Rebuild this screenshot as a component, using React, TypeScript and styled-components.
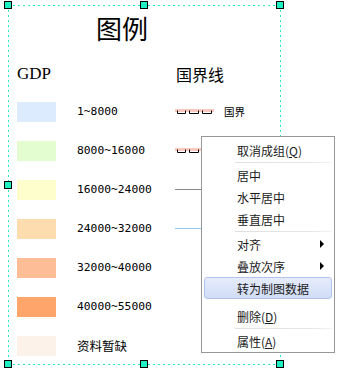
import React from 'react';
import styled, { createGlobalStyle } from 'styled-components';

const GlobalStyle = createGlobalStyle`
  html, body {
    margin: 0;
    padding: 0;
    background: #ffffff;
  }
  body {
    font-family: 'Noto Sans CJK SC', 'Noto Sans', sans-serif;
  }
`;

const DOT = '#22e9c6';

const Page = styled.div`
  position: relative;
  width: 344px;
  height: 369px;
  overflow: hidden;
  background: #fff;
`;

const Frame = styled.div`
  position: relative;
  box-sizing: border-box;
  margin: 5px 0 0 8px;
  width: 273px;
  height: 360px;
  padding: 10px 0 0 9px;
  background-image:
    repeating-linear-gradient(to right, ${DOT} 0 2px, transparent 2px 5px),
    repeating-linear-gradient(to right, ${DOT} 0 2px, transparent 2px 5px),
    repeating-linear-gradient(to bottom, ${DOT} 0 2px, transparent 2px 5px),
    repeating-linear-gradient(to bottom, ${DOT} 0 2px, transparent 2px 5px);
  background-size: 100% 1px, 100% 1px, 1px 100%, 1px 100%;
  background-position: 0 0, 0 100%, 0 0, 100% 0;
  background-repeat: no-repeat;
`;

const Handle = styled.span<{ $x: string; $y: string }>`
  position: absolute;
  left: ${(p) => p.$x};
  top: ${(p) => p.$y};
  width: 8px;
  height: 8px;
  box-sizing: border-box;
  margin: -4px 0 0 -4px;
  background: #1ff0c4;
  border: 1px solid #000;
`;

const Title = styled.div`
  margin: 0 0 15px 79px;
  height: 26px;
  line-height: 26px;
  font-size: 26px;
  color: #000;
`;

const Legend = styled.div`
  display: grid;
  grid-template-columns: 158px auto;
  grid-template-rows: 36px repeat(7, 39px);
  grid-auto-flow: column;
`;

const Column = styled.div`
  display: contents;
`;

const Header = styled.div<{ $serif?: boolean }>`
  display: flex;
  align-items: center;
  font-family: ${(p) =>
    p.$serif ? "'Liberation Serif', serif" : "'Noto Sans CJK SC', sans-serif"};
  font-size: ${(p) => (p.$serif ? '17px' : '16px')};
  padding-left: ${(p) => (p.$serif ? '0' : '1px')};
  color: #000;
`;

const Row = styled.div<{ $gap: number }>`
  display: flex;
  align-items: center;
  gap: ${(p) => p.$gap}px;
`;

const Swatch = styled.span<{ $color: string }>`
  width: 39px;
  height: 20px;
  background: ${(p) => p.$color};
  flex: none;
`;

const Label = styled.span<{ $cjk?: boolean }>`
  font-family: ${(p) =>
    p.$cjk
      ? "'Noto Sans CJK SC', sans-serif"
      : "'DejaVu Sans Mono', 'Liberation Mono', monospace"};
  font-size: ${(p) => (p.$cjk ? '12.5px' : '11.3px')};
  color: #000;
  white-space: nowrap;
`;

const SmallLabel = styled.span`
  font-size: 10.5px;
  color: #000;
  white-space: nowrap;
`;

const PlainLine = styled.span<{ $color: string }>`
  width: 39px;
  height: 1px;
  background: ${(p) => p.$color};
  flex: none;
`;

const BorderSymbol = () => (
  <svg width="39" height="8" viewBox="0 0 39 8" style={{ flex: 'none' }}>
    <rect x="0" y="1" width="39" height="3" fill="#f9c9bf" />
    <path
      d="M2.5 2.5 V5.5 H10.5 V2.5 M14.5 2.5 V5.5 H23.5 V2.5 M27.5 2.5 V5.5 H36.5 V2.5"
      fill="none"
      stroke="#000"
      strokeWidth="1"
    />
  </svg>
);

const Menu = styled.div`
  position: absolute;
  left: 201px;
  top: 136px;
  width: 134px;
  height: 217px;
  box-sizing: border-box;
  padding-top: 2px;
  background: #fff;
  border: 1px solid #979797;
  font-family: 'Noto Sans CJK SC', sans-serif;
  font-size: 12px;
  color: #1b1b1b;
`;

const Item = styled.div<{ $active?: boolean }>`
  display: flex;
  align-items: center;
  justify-content: space-between;
  box-sizing: border-box;
  height: 22px;
  margin: 0 2px;
  padding: 0 7px 0 32px;
  border: 1px solid ${(p) => (p.$active ? '#b3c3ea' : 'transparent')};
  border-radius: 3px;
  background: ${(p) =>
    p.$active ? 'linear-gradient(#e6ecfb, #d0dcf6)' : 'transparent'};
  white-space: nowrap;
`;

const Arrow = styled.span`
  width: 0;
  height: 0;
  border-left: 4px solid #000;
  border-top: 4px solid transparent;
  border-bottom: 4px solid transparent;
`;

const Separator = styled.div`
  height: 1px;
  margin: 1px 2px 1px 33px;
  background: linear-gradient(to right, #e0e0e0, #e6e6e6 80%, #f4f4f4);
`;

const Gap = styled.div`
  height: 6px;
`;

const gdp = [
  { color: '#dcebfd', label: '1~8000' },
  { color: '#e3fdd1', label: '8000~16000' },
  { color: '#fefecd', label: '16000~24000' },
  { color: '#fddcaf', label: '24000~32000' },
  { color: '#fdbd96', label: '32000~40000' },
  { color: '#fda56a', label: '40000~55000' },
];

const App = () => {
  return (
    <Page>
      <GlobalStyle />
      <Frame>
        <Title>图例</Title>
        <Legend>
          <Column>
            <Header $serif>GDP</Header>
            {gdp.map((g) => (
              <Row key={g.label} $gap={21}>
                <Swatch $color={g.color} />
                <Label>{g.label}</Label>
              </Row>
            ))}
            <Row $gap={21}>
              <Swatch $color="#fdf2ea" />
              <Label $cjk>资料暂缺</Label>
            </Row>
          </Column>
          <Column>
            <Header>国界线</Header>
            <Row $gap={10}>
              <BorderSymbol />
              <SmallLabel>国界</SmallLabel>
            </Row>
            <Row $gap={10}>
              <BorderSymbol />
            </Row>
            <Row $gap={10}>
              <PlainLine $color="#8a8a8a" />
            </Row>
            <Row $gap={10}>
              <PlainLine $color="#8ec6ef" />
            </Row>
          </Column>
        </Legend>
        <Handle $x="0px" $y="0px" />
        <Handle $x="136px" $y="0px" />
        <Handle $x="272px" $y="0px" />
        <Handle $x="0px" $y="180px" />
        <Handle $x="272px" $y="180px" />
        <Handle $x="0px" $y="359px" />
        <Handle $x="136px" $y="359px" />
        <Handle $x="272px" $y="359px" />
      </Frame>
      <Menu>
        <Item>
          <span>
            取消成组(<u>Q</u>)
          </span>
        </Item>
        <Separator />
        <Item>居中</Item>
        <Item>水平居中</Item>
        <Item>垂直居中</Item>
        <Separator />
        <Item>
          <span>对齐</span>
          <Arrow />
        </Item>
        <Item>
          <span>叠放次序</span>
          <Arrow />
        </Item>
        <Item $active>转为制图数据</Item>
        <Gap />
        <Item>
          <span>
            删除(<u>D</u>)
          </span>
        </Item>
        <Separator />
        <Item>
          <span>
            属性(<u>A</u>)
          </span>
        </Item>
      </Menu>
    </Page>
  );
};

export default App;
